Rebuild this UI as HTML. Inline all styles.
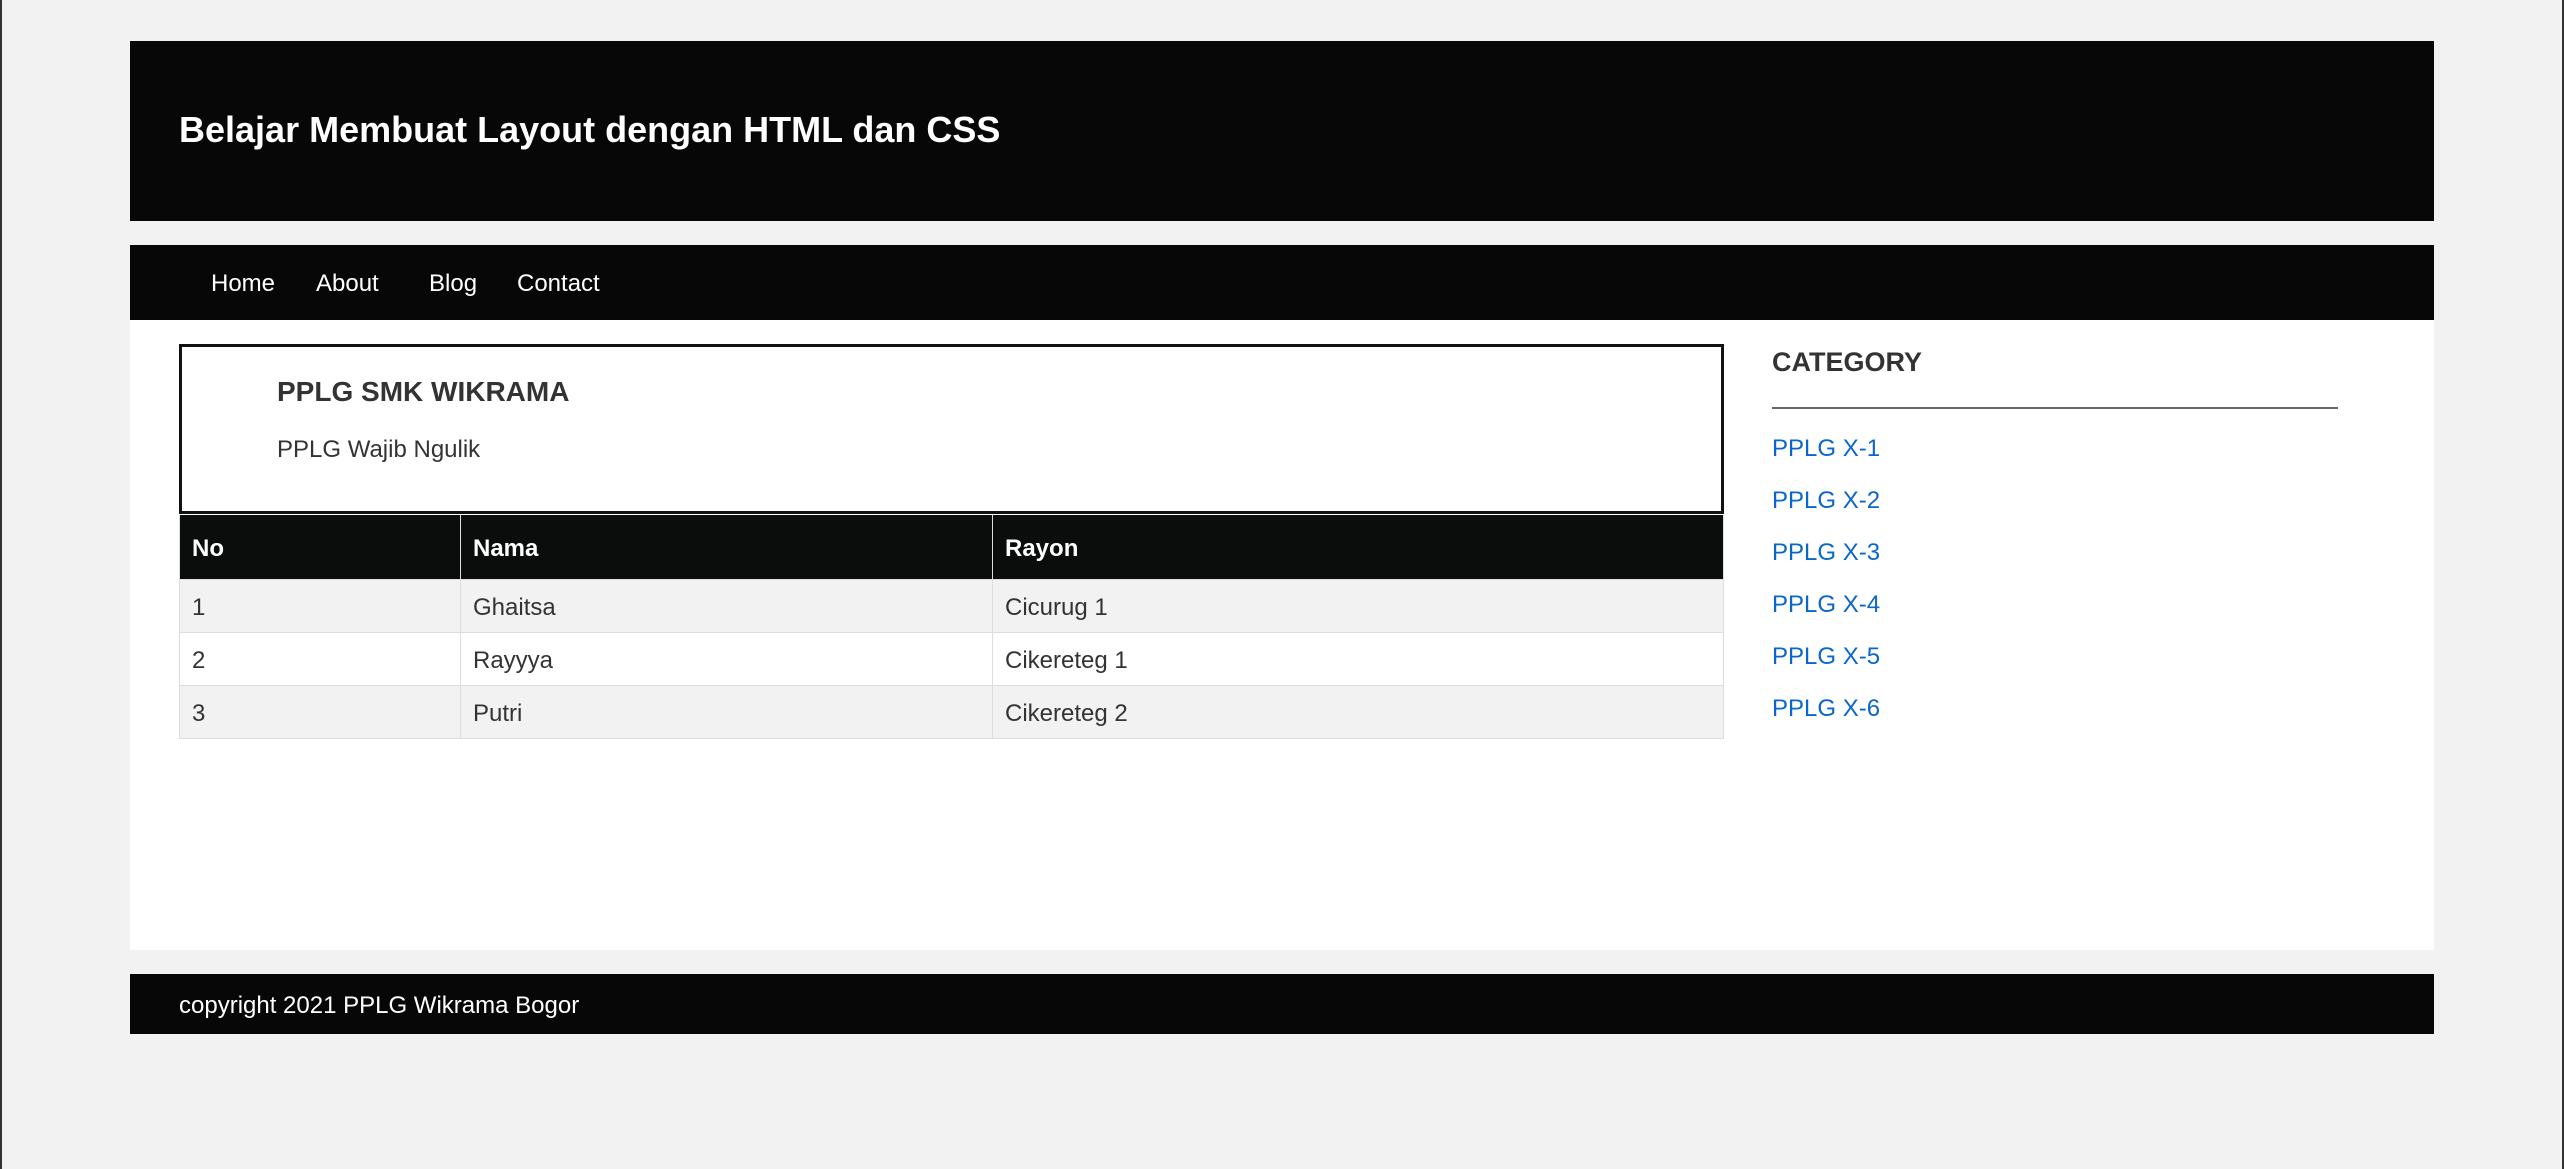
<!DOCTYPE html>
<html><head><meta charset="utf-8"><style>
*{margin:0;padding:0;box-sizing:border-box}
html,body{width:2564px;height:1169px;overflow:hidden}
body{background:#f2f2f2;font-family:"Liberation Sans",Arial,sans-serif;position:relative}
.a{position:absolute}
.hdr{left:130px;top:41px;width:2304px;height:180px;background:#070707}
.hdr h1{position:absolute;left:49px;top:68px;font-size:36px;font-weight:bold;color:#fff;line-height:42px}
.nav{left:130px;top:245px;width:2304px;height:75px;background:#070707}
.nav span{position:absolute;top:25px;font-size:24px;color:#fff;line-height:28px}
.main{left:130px;top:320px;width:2304px;height:630px;background:#fff}
.box{left:179px;top:344px;width:1545px;height:170px;border:3px solid #111;background:#fff}
.box h2{position:absolute;left:95px;top:29px;font-size:28px;font-weight:bold;color:#333;line-height:32px}
.box p{position:absolute;left:95px;top:89px;font-size:24px;color:#333;line-height:28px}
table{position:absolute;left:179px;top:515px;width:1545px;border-collapse:collapse;font-size:24px;color:#333}
th{background:#0b0c0c;color:#fff;text-align:left;height:64px;padding:4px 12px 0;border:1px solid #ddd;border-top:0}
td{height:53px;padding:4px 12px 0;border:1px solid #ddd}
tr.o td{background:#f2f2f2}
.cat{left:1772px;top:346px;font-size:27px;font-weight:bold;color:#333;line-height:32px}
.hr{left:1772px;top:407px;width:566px;height:2px;background:#666}
.lk{left:1772px;font-size:24px;color:#0a66cc;line-height:28px}
.ft{left:130px;top:974px;width:2304px;height:60px;background:#070707}
.ft span{position:absolute;left:49px;top:18px;font-size:24px;color:#fff;line-height:28px}
</style></head><body>
<div class="a" style="left:0;top:0;width:2px;height:1169px;background:#333"></div>
<div class="a" style="right:0;top:0;width:2px;height:1169px;background:#333"></div>
<div class="a hdr"><h1>Belajar Membuat Layout dengan HTML dan CSS</h1></div>
<div class="a nav"><span style="left:81px">Home</span><span style="left:186px">About</span><span style="left:299px">Blog</span><span style="left:387px">Contact</span></div>
<div class="a main"></div>
<div class="a box"><h2>PPLG SMK WIKRAMA</h2><p>PPLG Wajib Ngulik</p></div>
<table>
<tr><th style="width:281px">No</th><th style="width:532px">Nama</th><th>Rayon</th></tr>
<tr class="o"><td>1</td><td>Ghaitsa</td><td>Cicurug 1</td></tr>
<tr><td>2</td><td>Rayyya</td><td>Cikereteg 1</td></tr>
<tr class="o"><td>3</td><td>Putri</td><td>Cikereteg 2</td></tr>
</table>
<div class="a cat">CATEGORY</div>
<div class="a hr"></div>
<div class="a lk" style="top:435px">PPLG X-1</div>
<div class="a lk" style="top:487px">PPLG X-2</div>
<div class="a lk" style="top:539px">PPLG X-3</div>
<div class="a lk" style="top:591px">PPLG X-4</div>
<div class="a lk" style="top:643px">PPLG X-5</div>
<div class="a lk" style="top:695px">PPLG X-6</div>
<div class="a ft"><span>copyright 2021 PPLG Wikrama Bogor</span></div>
</body></html>
